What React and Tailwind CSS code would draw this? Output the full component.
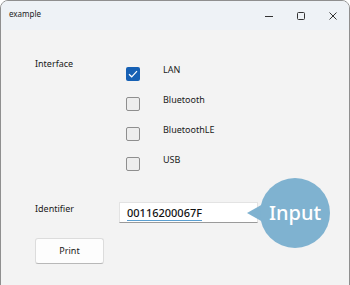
const font = { fontFamily: '"Noto Sans", "Open Sans", sans-serif' }

const options = [
  { name: "LAN", checked: true },
  { name: "Bluetooth", checked: false },
  { name: "BluetoothLE", checked: false },
  { name: "USB", checked: false },
]

function CheckBox({ checked }) {
  if (checked) {
    return (
      <span className="flex h-[14px] w-[14px] items-center justify-center rounded-[2px] bg-[#1660b4]">
        <svg width="10" height="8" viewBox="0 0 10 8" fill="none">
          <path d="M1 4.2 L3.7 6.8 L9 1.2" stroke="white" strokeWidth="1.2" />
        </svg>
      </span>
    )
  }
  return <span className="h-[14px] w-[14px] rounded-[2px] border border-[#8e8e8e] bg-[#ededed]" />
}

export default function App() {
  return (
    <div className="h-[285px] w-[350px] overflow-hidden bg-white" style={font}>
      <div className="h-[300px] w-[350px] overflow-hidden rounded-t-[8px] border border-[#8f8f8f] bg-[#f3f3f3]">
        {/* title bar */}
        <div className="flex h-[29px] items-center bg-[#eef2f6] pl-[8px] text-[8px] text-[#1b1b1b]">
          <span className="-mt-[4px]">example</span>
          <div className="ml-auto flex items-center text-[#333]">
            <div className="flex w-[32px] justify-center">
              <svg width="10" height="10" viewBox="0 0 10 10">
                <path d="M1 5.5 H9" stroke="#333" strokeWidth="1" />
              </svg>
            </div>
            <div className="flex w-[32px] justify-center">
              <svg width="10" height="10" viewBox="0 0 10 10">
                <rect x="1.5" y="1.5" width="7" height="7" rx="1" fill="none" stroke="#333" strokeWidth="1" />
              </svg>
            </div>
            <div className="flex w-[32px] justify-center">
              <svg width="10" height="10" viewBox="0 0 10 10">
                <path d="M1.5 1.5 L8.5 8.5 M8.5 1.5 L1.5 8.5" stroke="#333" strokeWidth="1" />
              </svg>
            </div>
          </div>
        </div>

        {/* body */}
        <div className="relative pl-[34px] pt-[28px] text-[9px] text-[#1a1a1a]">
          <div className="flex">
            <div className="w-[91px] leading-[12px]">Interface</div>
            <div className="mt-[9px] flex flex-col gap-[16px]">
              {options.map((o) => (
                <div key={o.name} className="flex items-start">
                  <CheckBox checked={o.checked} />
                  <span className="ml-[23px] -mt-[3px] leading-[12px]">{o.name}</span>
                </div>
              ))}
            </div>
          </div>

          <div className="mt-[32px] flex items-start">
            <div className="w-[84px] leading-[12px]">Identifier</div>
            <div className="-mt-[1px] h-[21px] w-[139px] border border-[#e3e3e3] border-b-[#9a9a9a] bg-white pl-[7px] pt-[3px]">
              <div className="inline-flex flex-col">
                <span className="text-[11px] font-medium leading-[13px] text-[#111]">00116200067F</span>
                <span className="mt-[1px] h-[1px] w-full bg-[#5b9fd0]" />
              </div>
            </div>
          </div>

          <button className="mt-[15px] flex h-[26px] w-[69px] items-center justify-center rounded-[3px] border border-[#dcdcdc] border-b-[#b8b8b8] bg-[#fdfdfd] text-[9px] text-[#1a1a1a]">
            Print
          </button>

          {/* callout */}
          <div className="absolute left-[246px] top-[148px] flex items-center">
            <svg width="16" height="20" viewBox="0 0 16 20" className="-mr-[3px]">
              <polygon points="0,10 16,1 16,19" fill="#7fb2d0" />
            </svg>
            <div className="flex h-[70px] w-[70px] items-center justify-center rounded-full bg-[#7fb2d0]">
              <span className="text-[20px] font-medium leading-none text-white">Input</span>
            </div>
          </div>
        </div>
      </div>
    </div>
  )
}
